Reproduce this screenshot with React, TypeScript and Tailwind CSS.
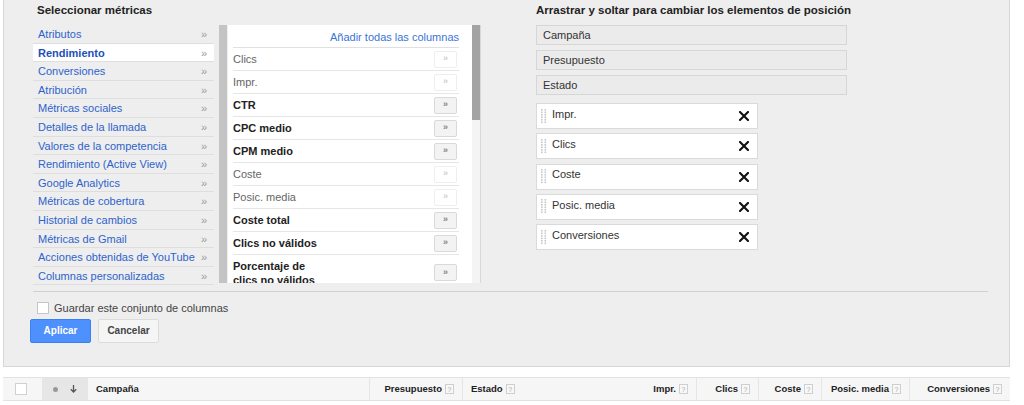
import React from "react";

const categories = [
  "Atributos",
  "Rendimiento",
  "Conversiones",
  "Atribución",
  "Métricas sociales",
  "Detalles de la llamada",
  "Valores de la competencia",
  "Rendimiento (Active View)",
  "Google Analytics",
  "Métricas de cobertura",
  "Historial de cambios",
  "Métricas de Gmail",
  "Acciones obtenidas de YouTube",
  "Columnas personalizadas",
];

const metrics = [
  { name: "Clics", added: true },
  { name: "Impr.", added: true },
  { name: "CTR", added: false },
  { name: "CPC medio", added: false },
  { name: "CPM medio", added: false },
  { name: "Coste", added: true },
  { name: "Posic. media", added: true },
  { name: "Coste total", added: false },
  { name: "Clics no válidos", added: false },
  { name: "Porcentaje de clics no válidos", added: false },
];

const fixedCols = ["Campaña", "Presupuesto", "Estado"];
const chosenCols = ["Impr.", "Clics", "Coste", "Posic. media", "Conversiones"];

const DragDots = () => (
  <svg width="6" height="15" viewBox="0 0 6 15" className="shrink-0">
    {[0, 1, 2, 3, 4, 5].map((r) =>
      [0, 1].map((c) => (
        <rect key={`${r}-${c}`} x={c * 3.5} y={r * 2.5} width="1.6" height="1.6" fill="#c8c8c8" />
      ))
    )}
  </svg>
);

const CloseX = () => (
  <svg width="10" height="10" viewBox="0 0 10 10">
    <path d="M1 1L9 9M9 1L1 9" stroke="#111" strokeWidth="2.1" strokeLinecap="square" />
  </svg>
);

const Help = () => (
  <span className="ml-[3px] inline-flex h-[10px] w-[9px] items-center justify-center border border-[#cfcfcf] bg-[#f8f8f8] text-[7px] font-normal leading-none text-[#aaa]">
    ?
  </span>
);

const MetricsPanel: React.FC = () => {
  return (
    <div className="ml-[3px] flex h-[367px] w-[1007px] flex-col border border-t-0 border-[#d6d6d6] bg-[#eeeeee] pl-[29px] pr-[21px]">
      <div className="flex">
        {/* left side: categories + metric list */}
        <div className="flex w-[503px] flex-col">
          <h2 className="h-[20px] pl-[4px] text-[11.5px] font-bold leading-[20px] text-[#222]">
            Seleccionar métricas
          </h2>
          <div className="mt-[5px] flex h-[260px]">
            <ul className="w-[181px]">
              {categories.map((c, i) => (
                <li
                  key={c}
                  className={
                    "flex h-[18.6px] items-center justify-between border-b border-[#dedede] pl-[5px] pr-[7px] pt-[1px] text-[11px] " +
                    (i === 1 ? "bg-white font-bold text-[#1d4fb8]" : "text-[#2d63cc]")
                  }
                >
                  <span className="whitespace-nowrap">{c}</span>
                  <span className="text-[11px] font-normal text-[#9a9a9a]">»</span>
                </li>
              ))}
            </ul>
            <div className="ml-[5px] h-[258px] w-[8px] bg-[#c4c4c4]" />
            <div className="ml-[1px] flex h-[258px] w-[253px] border-r border-[#d8d8d8] bg-white">
              <div className="w-[243px] overflow-hidden pl-[5px] pr-[12px]">
                <div className="flex h-[23px] items-center justify-end border-b border-[#e0e0e0] pt-[2px] text-[11px] text-[#3a75d6]">
                  Añadir todas las columnas
                </div>
                {metrics.map((m, i) => (
                  <div
                    key={m.name}
                    className={
                      "flex shrink-0 items-center justify-between border-b border-[#e6e6e6] text-[11px] " +
                      (i === metrics.length - 1 ? "h-[36px]" : "h-[23px]")
                    }
                  >
                    <span
                      className={
                        m.added
                          ? "text-[#666]"
                          : "w-[90px] font-bold leading-[14px] text-[#222]"
                      }
                    >
                      {m.name}
                    </span>
                    <span
                      className={
                        "mr-[2px] flex h-[17px] w-[23px] items-center justify-center rounded-[2px] border text-[9px] font-bold " +
                        (m.added
                          ? "border-[#eeeeee] bg-white text-[#d0d0d0]"
                          : "border-[#d9d9d9] bg-[#f3f3f3] text-[#888]")
                      }
                    >
                      »
                    </span>
                  </div>
                ))}
              </div>
              <div className="ml-[1px] flex w-[8px] flex-col bg-[#f4f4f4]">
                <div className="h-[95px] bg-[#a3a3a3]" />
              </div>
            </div>
          </div>
        </div>

        {/* right side: order of columns */}
        <div className="flex flex-col">
          <h2 className="h-[20px] text-[11.5px] font-bold leading-[20px] text-[#222]">
            Arrastrar y soltar para cambiar los elementos de posición
          </h2>
          <div className="mt-[5px] flex flex-col gap-[5px]">
            {fixedCols.map((c) => (
              <div
                key={c}
                className="flex h-[20px] w-[311px] items-center border border-[#d6d6d6] bg-[#ebebeb] pl-[6px] text-[11px] text-[#333]"
              >
                {c}
              </div>
            ))}
          </div>
          <div className="mt-[8px] flex flex-col gap-[4.25px]">
            {chosenCols.map((c) => (
              <div
                key={c}
                className="flex h-[26px] w-[222px] items-center border border-[#dadada] bg-white pl-[4px] pr-[8px]"
              >
                <DragDots />
                <span className="mb-[4px] ml-[5px] flex-1 text-[11px] text-[#333]">{c}</span>
                <CloseX />
              </div>
            ))}
          </div>
        </div>
      </div>

      <div className="mt-[6px] w-[955px] border-t border-[#d0d0d0]" />

      <label className="mt-[8px] flex items-center pl-[4px]">
        <span className="h-[12px] w-[12px] border border-[#c6c6c6] bg-white" />
        <span className="ml-[5px] text-[11px] text-[#444]">Guardar este conjunto de columnas</span>
      </label>

      <div className="mt-[2px] -ml-[3px] flex gap-[7px]">
        <button className="h-[24px] w-[61px] rounded-[2px] border border-[#3b82f0] bg-[#4d90fe] text-[10px] font-bold text-white">
          Aplicar
        </button>
        <button className="h-[24px] w-[61px] rounded-[2px] border border-[#dcdcdc] bg-[#f5f5f5] text-[10px] font-bold text-[#444]">
          Cancelar
        </button>
      </div>
    </div>
  );
};

const TableHeader: React.FC = () => {
  const cell = "flex h-full items-center border-r border-[#e6e6e6] px-[8px] text-[9.5px] font-bold text-[#222] whitespace-nowrap";
  return (
    <div className="ml-[3px] mt-[10px] grid h-[24px] w-[1007px] grid-cols-[39px_46px_282px_93px_157px_77px_62px_63px_88px_100px] border-y border-[#e2e2e2] bg-[#f6f6f6]">
      <div className="flex h-full items-center pl-[12px]">
        <span className="h-[12px] w-[12px] border border-[#d0d0d0] bg-white" />
      </div>
      <div className="flex h-full items-center justify-center gap-[12px] bg-[#e6e6e6]">
        <span className="h-[5px] w-[5px] rounded-full bg-[#999]" />
        <svg width="7" height="8" viewBox="0 0 7 8">
          <path d="M3.5 0V7M0.8 4.3L3.5 7L6.2 4.3" stroke="#555" strokeWidth="1.3" fill="none" />
        </svg>
      </div>
      <div className={cell}>Campaña</div>
      <div className={cell + " justify-end"}>
        Presupuesto
        <Help />
      </div>
      <div className={cell + " border-r-0"}>
        Estado
        <Help />
      </div>
      <div className={cell + " justify-end"}>
        Impr.
        <Help />
      </div>
      <div className={cell + " justify-end"}>
        Clics
        <Help />
      </div>
      <div className={cell + " justify-end"}>
        Coste
        <Help />
      </div>
      <div className={cell + " justify-end"}>
        Posic. media
        <Help />
      </div>
      <div className={cell + " justify-end border-r-0"}>
        Conversiones
        <Help />
      </div>
    </div>
  );
};

export default function App() {
  return (
    <div className="h-[405px] w-[1024px] overflow-hidden bg-white font-['Liberation_Sans',Arial,sans-serif]">
      <MetricsPanel />
      <TableHeader />
    </div>
  );
}
